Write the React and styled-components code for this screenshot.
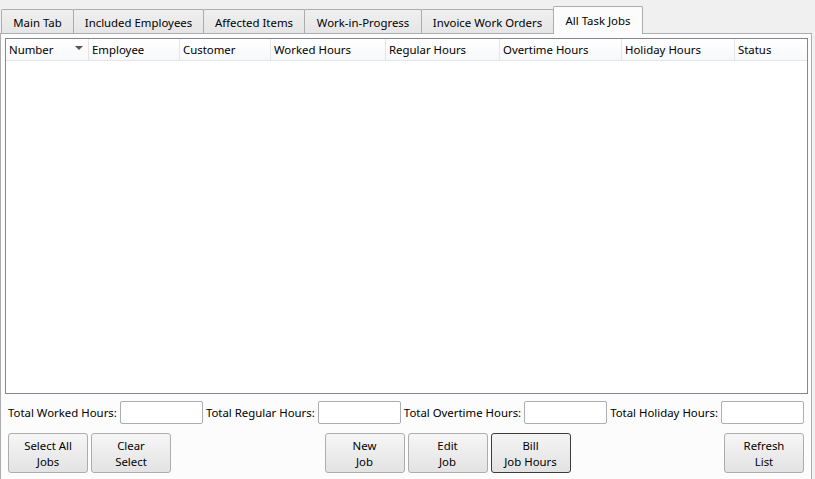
import React from 'react';
import styled, { createGlobalStyle } from 'styled-components';

const GlobalStyle = createGlobalStyle`
  html, body {
    margin: 0;
    padding: 0;
    background: #f0f0f0;
    overflow: hidden;
  }
  body {
    font-family: 'Noto Sans', 'Open Sans', sans-serif;
    font-size: 11.4px;
    color: #000;
  }
`;

const Window = styled.div`
  width: 815px;
  height: 479px;
  display: flex;
  flex-direction: column;
`;

const TabBar = styled.div`
  display: flex;
  align-items: flex-end;
  height: 34px;
  padding-left: 1px;
  margin-bottom: -1px;
  position: relative;
  z-index: 1;
`;

const Tab = styled.div`
  box-sizing: border-box;
  width: ${(p) => p.w}px;
  height: ${(p) => (p.active ? 28 : 25)}px;
  margin-left: -1px;
  display: flex;
  align-items: center;
  justify-content: center;
  padding-top: ${(p) => (p.active ? 0 : 1)}px;
  border: 1px solid #acacac;
  border-bottom: ${(p) => (p.active ? 'none' : '1px solid #adadad')};
  border-radius: 2px 2px 0 0;
  background: ${(p) =>
    p.active ? '#fcfcfc' : 'linear-gradient(#f0f0f0, #e5e5e5)'};
  position: relative;
  z-index: ${(p) => (p.active ? 1 : 0)};
  &:first-child {
    margin-left: 0;
  }
`;

const Pane = styled.div`
  box-sizing: border-box;
  width: 812px;
  flex: 1;
  border: 1px solid #adadad;
  border-bottom: none;
  background: #fcfcfc;
  padding: 4px 3px 0 4px;
  display: flex;
  flex-direction: column;
`;

const Table = styled.div`
  box-sizing: border-box;
  height: 356px;
  border: 1px solid #828790;
  background: #fff;
`;

const HeaderRow = styled.div`
  display: flex;
  height: 21px;
  border-bottom: 1px solid #e5e5e5;
  background: linear-gradient(#ffffff, #f7f8fa);
`;

const HeaderCell = styled.div`
  box-sizing: border-box;
  width: ${(p) => p.w}px;
  ${(p) => (p.last ? 'flex: 1;' : '')}
  padding-left: 3px;
  display: flex;
  align-items: center;
  position: relative;
  border-right: ${(p) => (p.last ? 'none' : '1px solid #e5e5e5')};
`;

const SortArrow = styled.span`
  position: absolute;
  right: 5px;
  top: 7px;
  width: 0;
  height: 0;
  border-left: 4px solid transparent;
  border-right: 4px solid transparent;
  border-top: 4px solid #555;
`;

const TotalsRow = styled.div`
  display: flex;
  align-items: center;
  height: 23px;
  margin-top: 7px;
  padding: 0 1px 0 3px;
`;

const TotalLabel = styled.span`
  margin-right: 3px;
  white-space: nowrap;
`;

const TotalInput = styled.div`
  box-sizing: border-box;
  width: 84px;
  height: 23px;
  border: 1px solid #abadb3;
  border-radius: 2px;
  background: #fff;
  margin-right: 3px;
`;

const ButtonRow = styled.div`
  display: flex;
  margin-top: 9px;
  padding: 0 1px 0 3px;
`;

const Spacer = styled.div`
  flex: 1;
`;

const Button = styled.div`
  box-sizing: border-box;
  width: 80px;
  height: 40px;
  margin-right: 3px;
  padding-top: 1px;
  border: 1px solid ${(p) => (p.focused ? '#3c3c3c' : '#adadad')};
  border-radius: 3px;
  background: ${(p) =>
    p.focused
      ? 'linear-gradient(#f4f4f4, #e2e2e2)'
      : 'linear-gradient(#f6f6f6, #e3e3e3)'};
  display: flex;
  flex-direction: column;
  align-items: center;
  justify-content: center;
  line-height: 16px;
  text-align: center;
`;

const tabs = [
  ['Main Tab', 73],
  ['Included Employees', 131],
  ['Affected Items', 102],
  ['Work-in-Progress', 118],
  ['Invoice Work Orders', 133],
];

const columns = [
  ['Number', 83],
  ['Employee', 91],
  ['Customer', 91],
  ['Worked Hours', 115],
  ['Regular Hours', 114],
  ['Overtime Hours', 122],
  ['Holiday Hours', 113],
  ['Status', 0],
];

const totals = [
  'Total Worked Hours:',
  'Total Regular Hours:',
  'Total Overtime Hours:',
  'Total Holiday Hours:',
];

const TwoLine = ({ top, bottom }) => (
  <>
    <span>{top}</span>
    <span>{bottom}</span>
  </>
);

export default function App() {
  return (
    <Window>
      <GlobalStyle />
      <TabBar>
        {tabs.map(([label, w]) => (
          <Tab key={label} w={w}>
            {label}
          </Tab>
        ))}
        <Tab active w={90}>
          All Task Jobs
        </Tab>
      </TabBar>
      <Pane>
        <Table>
          <HeaderRow>
            {columns.map(([label, w], i) => (
              <HeaderCell key={label} w={w} last={i === columns.length - 1}>
                {label}
                {i === 0 && <SortArrow />}
              </HeaderCell>
            ))}
          </HeaderRow>
        </Table>
        <TotalsRow>
          {totals.map((label) => (
            <React.Fragment key={label}>
              <TotalLabel>{label}</TotalLabel>
              <TotalInput />
            </React.Fragment>
          ))}
        </TotalsRow>
        <ButtonRow>
          <Button>
            <TwoLine top="Select All" bottom="Jobs" />
          </Button>
          <Button>
            <TwoLine top="Clear" bottom="Select" />
          </Button>
          <Spacer />
          <Button>
            <TwoLine top="New" bottom="Job" />
          </Button>
          <Button>
            <TwoLine top="Edit" bottom="Job" />
          </Button>
          <Button focused>
            <TwoLine top="Bill" bottom="Job Hours" />
          </Button>
          <Spacer />
          <Button>
            <TwoLine top="Refresh" bottom="List" />
          </Button>
        </ButtonRow>
      </Pane>
    </Window>
  );
}
